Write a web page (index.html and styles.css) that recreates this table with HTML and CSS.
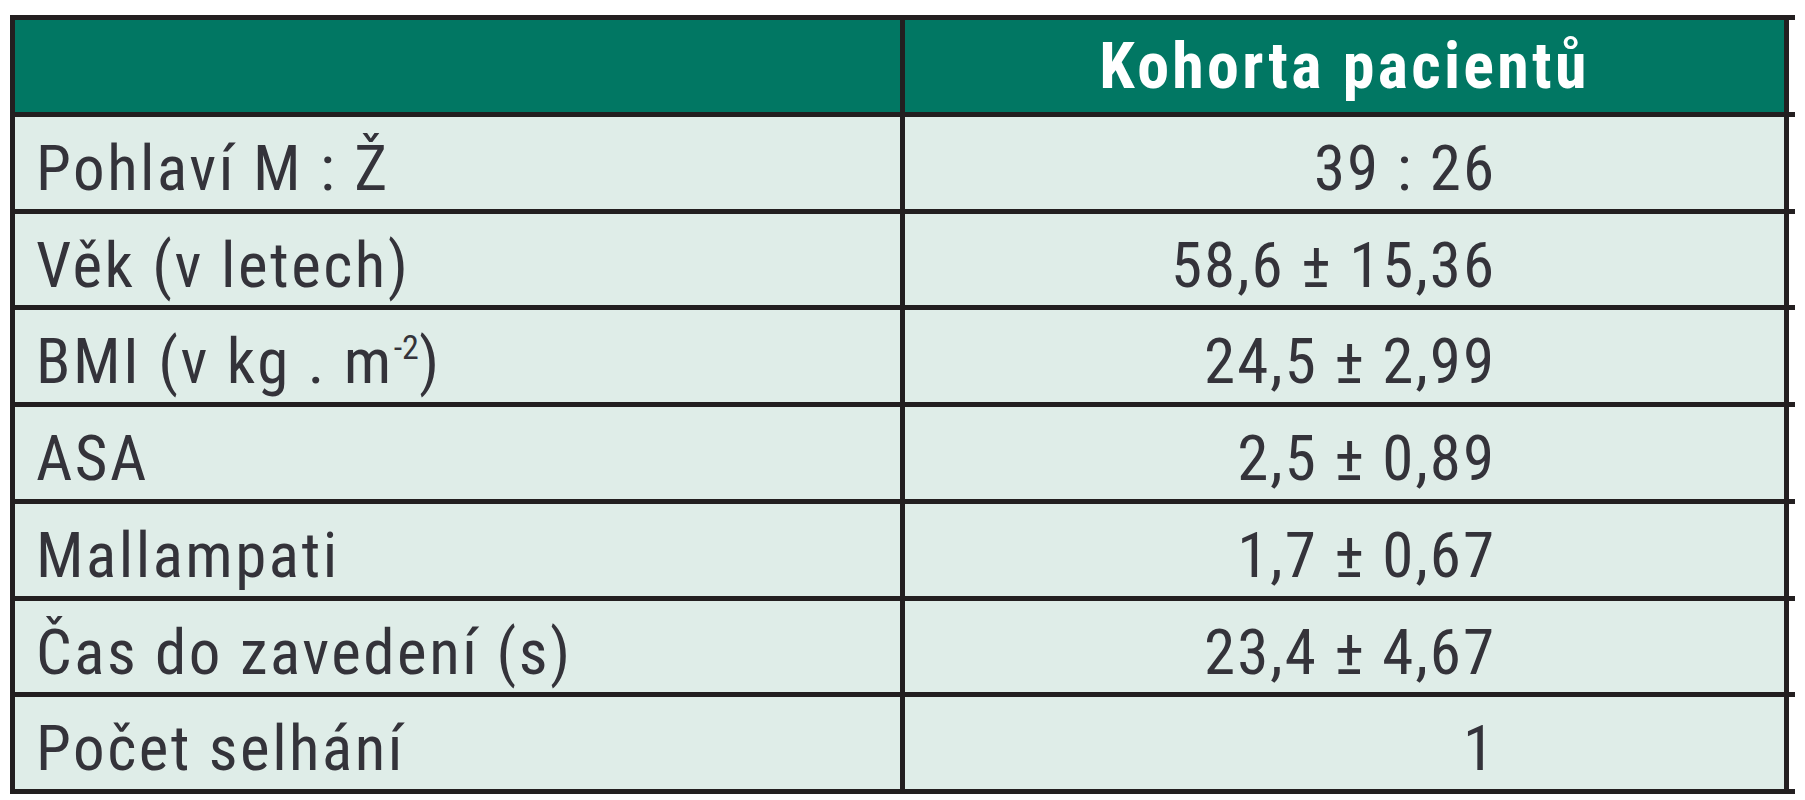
FILE: index.html
```html
<!DOCTYPE html>
<html lang="cs">
<head>
<meta charset="utf-8">
<title>Kohorta pacientů</title>
<link rel="stylesheet" href="styles.css">
</head>
<body>
<div class="table">
  <div class="row head">
    <div class="cell label"></div>
    <div class="cell value">Kohorta pacientů</div>
    <div class="tail"></div>
  </div>
  <div class="row">
    <div class="cell label">Pohlaví M : Ž</div>
    <div class="cell value">39 : 26</div>
    <div class="tail"></div>
  </div>
  <div class="row">
    <div class="cell label">Věk (v letech)</div>
    <div class="cell value">58,6 ± 15,36</div>
    <div class="tail"></div>
  </div>
  <div class="row">
    <div class="cell label">BMI (v kg . m<sup>-2</sup>)</div>
    <div class="cell value">24,5 ± 2,99</div>
    <div class="tail"></div>
  </div>
  <div class="row">
    <div class="cell label">ASA</div>
    <div class="cell value">2,5 ± 0,89</div>
    <div class="tail"></div>
  </div>
  <div class="row">
    <div class="cell label">Mallampati</div>
    <div class="cell value">1,7 ± 0,67</div>
    <div class="tail"></div>
  </div>
  <div class="row">
    <div class="cell label">Čas do zavedení (s)</div>
    <div class="cell value">23,4 ± 4,67</div>
    <div class="tail"></div>
  </div>
  <div class="row last">
    <div class="cell label">Počet selhání</div>
    <div class="cell value">1</div>
    <div class="tail"></div>
  </div>
</div>
</body>
</html>
```

FILE: styles.css
```css
html, body {
  margin: 0;
  padding: 0;
  background: #ffffff;
}

body {
  font-family: "Roboto", "Liberation Sans", Arial, sans-serif;
  font-stretch: 75%;
  color: #34333a;
}

.table {
  margin: 15px 0 0 10px;
  width: 1785px;
}

.row {
  display: grid;
  grid-template-columns: 895px 884px 6px;
  height: 96.75px;
  box-sizing: border-box;
  border-top: 5px solid #231f20;
}

.row.last {
  height: 101.75px;
  border-bottom: 5px solid #231f20;
}

.cell {
  box-sizing: border-box;
  background: #dfede8;
  font-size: 63px;
  line-height: 63px;
  letter-spacing: 2px;
  padding-top: 20px;
  white-space: nowrap;
}

.label {
  border-left: 5px solid #231f20;
  border-right: 5px solid #231f20;
  padding-left: 21px;
  letter-spacing: 2.5px;
}

.value {
  border-right: 5px solid #231f20;
  text-align: right;
  padding-right: 288px;
}

.head .cell {
  background: #017763;
}

.head .value {
  color: #ffffff;
  font-weight: bold;
  font-size: 64px;
  letter-spacing: 3.3px;
  text-align: center;
  padding-right: 0;
  padding-top: 15px;
}

.label sup {
  font-size: 34px;
  line-height: 0;
  vertical-align: 24px;
  letter-spacing: 0;
}
```
